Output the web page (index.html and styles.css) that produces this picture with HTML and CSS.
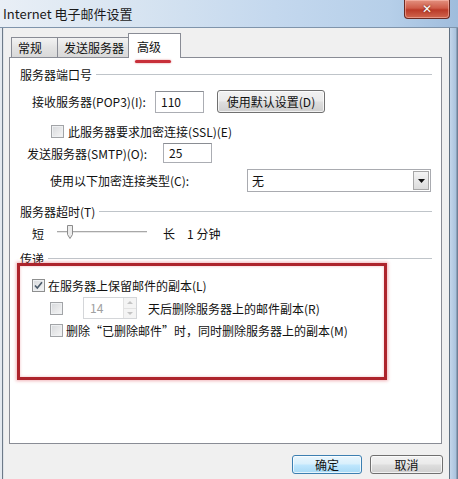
FILE: index.html
```html
<!DOCTYPE html>
<html lang="zh-CN">
<head>
<meta charset="utf-8">
<title>Internet 电子邮件设置</title>
<link rel="stylesheet" href="styles.css">
</head>
<body>
<div class="win">
  <div class="titlebar">
    <span class="title">Internet 电子邮件设置</span>
    <div class="close"><span class="x">✕</span></div>
  </div>
  <div class="main">
    <div class="lframe"></div>
    <div class="client">
      <div class="tabs">
        <div class="tab t1">常规</div>
        <div class="tab t2">发送服务器</div>
        <div class="tab t3 sel">高级</div>
      </div>
      <div class="panel">
        <div class="grp g1"><span>服务器端口号</span></div>
        <div class="row pop">
          <span class="lbl lbl-pop">接收服务器(POP3)(I):</span>
          <span class="input in-pop">110</span>
          <span class="btn btn-def">使用默认设置(D)</span>
        </div>
        <div class="row ssl">
          <span class="cb"></span><span class="cbt">此服务器要求加密连接(SSL)(E)</span>
        </div>
        <div class="row smtp">
          <span class="lbl lbl-smtp">发送服务器(SMTP)(O):</span>
          <span class="input in-smtp">25</span>
        </div>
        <div class="row enc">
          <span class="lbl lbl-enc">使用以下加密连接类型(C):</span>
          <span class="select"><span class="val">无</span><span class="drop"><svg width="7" height="4" viewBox="0 0 7 4"><path d="M0 0h7L3.5 4z" fill="#111"/></svg></span></span>
        </div>
        <div class="grp g2"><span>服务器超时(T)</span></div>
        <div class="row slider">
          <span class="short">短</span>
          <svg class="track" width="90" height="20" viewBox="0 0 90 20">
            <rect x="0" y="8" width="90" height="1" fill="#a8a8a8"/>
            <rect x="0" y="9" width="90" height="1" fill="#e6e6e6"/>
            <path d="M10.5 2.5h5v9l-2.5 4l-2.5-4z" fill="#ececec" stroke="#8b8b8b"/>
          </svg>
          <span class="long">长</span><span class="min">1 分钟</span>
        </div>
        <div class="grp g3"><span>传递</span></div>
        <div class="redbox">
          <div class="row keep">
            <span class="cb on"><svg width="9" height="9" viewBox="0 0 9 9"><path d="M1 4.5l2.3 2.6L8 1.2" fill="none" stroke="#4a5a6a" stroke-width="1.6"/></svg></span>
            <span class="cbt">在服务器上保留邮件的副本(L)</span>
          </div>
          <div class="row days">
            <span class="cb"></span>
            <span class="spin"><span class="sv">14</span><span class="arrows"><span class="au"></span><span class="ad"></span></span></span>
            <span class="dtxt">天后删除服务器上的邮件副本(R)</span>
          </div>
          <div class="row del">
            <span class="cb"></span><span class="cbt">删除“已删除邮件”时，同时删除服务器上的副本(M)</span>
          </div>
        </div>
      </div>
      <div class="footer">
        <span class="btn ok">确定</span>
        <span class="btn cancel">取消</span>
      </div>
    </div>
    <div class="rframe"></div>
  </div>
</div>
</body>
</html>
```
FILE: styles.css
```css
* { box-sizing: border-box; }
html, body { margin: 0; padding: 0; }
body {
  width: 458px; height: 479px; overflow: hidden;
  font-family: "Noto Sans CJK SC", "Noto Sans", sans-serif;
  font-size: 12px; color: #111;
  background: #f0f0f0;
}
.win { width: 458px; height: 479px; display: flex; flex-direction: column; }
.titlebar {
  height: 28px; flex: none;
  display: flex; align-items: flex-start;
  background: linear-gradient(to right, #e9eff6 0%, #d7e4f1 30%, #c4d8ee 60%, #b6cfe9 85%, #9fbcdc 100%);
  border-bottom: 1px solid #7f94ab;
}
.title { padding-left: 3px; line-height: 28px; font-size: 13px; color: #1a1a1a; }
.close {
  margin-left: auto; margin-right: 8px;
  width: 46px; height: 19px;
  border: 1px solid #6b2a22; border-top: none;
  border-radius: 0 0 4px 4px;
  background: linear-gradient(#e3917f 0%, #cf5c49 45%, #bb3a28 55%, #d0674f 100%);
  box-shadow: inset 0 0 0 1px rgba(255,200,190,.5);
  display: flex; align-items: center; justify-content: center;
}
.close .x { color: #fff; font-size: 12px; font-weight: bold; line-height: 1; text-shadow: 0 0 2px #5a1a12; font-family: "DejaVu Sans", sans-serif; }
.main { flex: 1; display: flex; min-height: 0; }
.lframe {
  width: 4px; flex: none;
  background: linear-gradient(to right, #e4e9ef 0, #e4e9ef 2px, #6d7a88 2px, #6d7a88 3px, #dfe3e8 3px);
}
.rframe {
  width: 9px; flex: none;
  background: linear-gradient(to right, #5f6f80 0, #5f6f80 1px, #c3d6ea 1px, #a9c2dd 7px, #6d8096 8px);
}
.client { flex: 1; display: flex; flex-direction: column; background: #f0f0f0; }
.tabs {
  height: 29px; flex: none;
  display: flex; align-items: flex-end;
  padding-left: 7px;
}
.tab {
  height: 20px;
  border: 1px solid #898c95; border-bottom: none;
  background: linear-gradient(#f3f3f3, #e3e3e3 50%, #d9d9d9);
  padding-left: 6px; line-height: 19px;
}
.t1 { width: 47px; }
.t2 { width: 71px; border-left: none; }
.t3 { width: 53px; margin-left: -1px; }
.tab.sel {
  height: 25px; margin-bottom: -1px;
  background: #fff; position: relative; z-index: 2;
  padding-left: 8px; line-height: 26px;
}
.tab.sel::after {
  content: ""; position: absolute;
  left: 6px; width: 36px; top: 26px; height: 3px;
  background: #c8303a; border-radius: 2px;
  box-shadow: 0 0 2px rgba(200, 40, 50, .6);
}
.panel {
  flex: 1; margin-left: 5px; margin-right: 7px;
  background: #fff; border: 1px solid #898c95;
  padding: 0 9px 0 10px;
  display: flex; flex-direction: column;
}
.grp { display: flex; align-items: center; height: 16px; }
.grp::after { content: ""; flex: 1; height: 1px; background: #bfc4c9; margin-left: 4px; }
.g1 { margin-top: 8px; }
.g2 { margin-top: 11px; }
.g3 { margin-top: 8px; height: 14px; }
.row { display: flex; align-items: center; }
.pop { margin-top: 8px; height: 23px; padding-left: 12px; }
.lbl-pop { width: 123px; }
.input {
  height: 22px; width: 49px;
  border: 1px solid #abadb3; border-top-color: #8a8d93;
  background: #fff; padding-left: 5px; line-height: 20px;
}
.in-smtp { height: 20px; line-height: 18px; }
.btn {
  display: inline-flex; align-items: center; justify-content: center;
  border: 1px solid #707070; border-radius: 3px;
  background: linear-gradient(#f2f2f2 0%, #ebebeb 45%, #dddddd 55%, #cfcfcf 100%);
  box-shadow: inset 0 0 0 1px rgba(255,255,255,.7);
}
.btn-def { margin-left: 13px; width: 108px; height: 23px; }
.ssl { margin-top: 9px; height: 18px; padding-left: 31px; }
.cb {
  width: 13px; height: 13px; flex: none;
  border: 1px solid #a2a4a7;
  background: linear-gradient(135deg, #d6d8db, #f6f6f6);
  box-shadow: inset 0 0 0 1px #eef0f2;
  display: inline-flex; align-items: center; justify-content: center;
}
.cb.on { border-color: #8e8f8f; }
.cbt { margin-left: 4px; }
.smtp { margin-top: 3px; height: 20px; padding-left: 7px; }
.lbl-smtp { width: 136px; }
.enc { margin-top: 6px; height: 23px; padding-left: 30px; }
.lbl-enc { width: 197px; }
.select {
  width: 184px; height: 23px;
  border: 1px solid #a9abb0; background: #fff;
  display: flex; align-items: center;
}
.select .val { flex: 1; padding-left: 4px; }
.drop {
  width: 16px; height: 19px; margin-right: 1px;
  border: 1px solid #a7a7a7;
  background: linear-gradient(#f4f4f4, #dcdcdc);
  display: flex; align-items: center; justify-content: center;
}
.slider { margin-top: 4px; height: 20px; padding-left: 12px; }
.track { margin-left: 13px; }
.long { margin-left: 16px; }
.min { margin-left: 12px; }
.redbox {
  position: relative; z-index: 1;
  margin-top: -2px; margin-left: -3px; width: 370px; height: 117px;
  border: 3px solid #ad242c;
  box-shadow: 0 0 3px 1px rgba(225, 90, 100, .45), inset 0 0 3px rgba(225, 90, 100, .4);
  background: #fff;
}
.keep { margin-top: 11px; height: 16px; padding-left: 12px; }
.keep .cbt { margin-left: 3px; }
.days { margin-top: 4px; height: 22px; padding-left: 30px; }
.spin {
  margin-left: 20px; width: 54px; height: 22px;
  border: 1px solid #d4d6d9; background: #fff;
  display: flex;
}
.sv { flex: 1; color: #a0a0a0; padding-left: 6px; line-height: 20px; }
.arrows { width: 13px; display: flex; flex-direction: column; border-left: 1px solid #e2e2e2; }
.au, .ad { flex: 1; background: #f4f4f4; position: relative; }
.au { border-bottom: 1px solid #e2e2e2; }
.au::after, .ad::after {
  content: ""; position: absolute; left: 3px; top: 3px;
  border-left: 3px solid transparent; border-right: 3px solid transparent;
}
.au::after { border-bottom: 3px solid #c4c4c4; }
.ad::after { border-top: 3px solid #c4c4c4; }
.dtxt { margin-left: 11px; }
.del { margin-top: 3px; height: 16px; padding-left: 30px; }
.del .cbt { margin-left: 3px; }
.footer {
  height: 35px; flex: none;
  display: flex; justify-content: flex-end; align-items: flex-start;
  padding-top: 11px; padding-right: 6px; gap: 8px;
}
.ok { width: 70px; height: 19px; border-color: #3c7fb1;
  background: linear-gradient(#eaf6fd 0%, #d9f0fc 45%, #bee6fd 55%, #a7d9f5 100%); }
.cancel { width: 73px; height: 19px; }
```
